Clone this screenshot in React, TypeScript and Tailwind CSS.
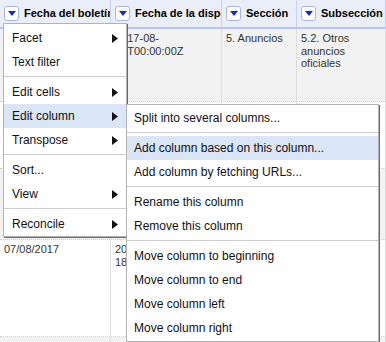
import React from 'react';

const font = { fontFamily: '"Liberation Sans", Arial, sans-serif' };

interface Row {
  cells: React.ReactNode[];
  height: string;
  shaded: boolean;
}

const rows: Row[] = [
  {
    height: 'h-[73px]',
    shaded: true,
    cells: ['07/08/2017', <>2017-08-<br />07T00:00:00Z</>, '5. Anuncios', <>5.2. Otros<br />anuncios<br />oficiales</>],
  },
  { height: 'h-[67px]', shaded: false, cells: ['07/08/2017', <>2017-08-<br />07T00:00:00Z</>, '', ''] },
  { height: 'h-[71px]', shaded: true, cells: ['07/08/2017', <>2017-08-<br />07T00:00:00Z</>, '', ''] },
  { height: 'h-[97px]', shaded: false, cells: ['07/08/2017', <>2017-08-<br />18T00:00:00Z</>, '', ''] },
  { height: 'h-[40px]', shaded: true, cells: ['07/08/2017', <>2017-08-<br />18T00:00:00Z</>, '', ''] },
];

const widths = ['w-[111px]', 'w-[111px]', 'w-[75px]', 'flex-1'];

function DropButton() {
  return (
    <span className="flex h-[15px] w-[15px] shrink-0 items-center justify-center rounded-[3px] border border-[#a9b6e4] bg-white">
      <svg width="8" height="5" viewBox="0 0 8 5">
        <path d="M0 0h8L4 5z" fill="#1a2bc4" />
      </svg>
    </span>
  );
}

function Arrow() {
  return (
    <svg width="6" height="9" viewBox="0 0 6 9" className="mr-[8px]">
      <path d="M0 0l6 4.5L0 9z" fill="#111" />
    </svg>
  );
}

type Item = { label: string; sub?: boolean; active?: boolean } | 'sep';

const mainItems: Item[] = [
  { label: 'Facet', sub: true },
  { label: 'Text filter' },
  'sep',
  { label: 'Edit cells', sub: true },
  { label: 'Edit column', sub: true, active: true },
  { label: 'Transpose', sub: true },
  'sep',
  { label: 'Sort...' },
  { label: 'View', sub: true },
  'sep',
  { label: 'Reconcile', sub: true },
];

const subItems: Item[] = [
  { label: 'Split into several columns...' },
  'sep',
  { label: 'Add column based on this column...', active: true },
  { label: 'Add column by fetching URLs...' },
  'sep',
  { label: 'Rename this column' },
  { label: 'Remove this column' },
  'sep',
  { label: 'Move column to beginning' },
  { label: 'Move column to end' },
  { label: 'Move column left' },
  { label: 'Move column right' },
];

function MenuList({ items, indent }: { items: Item[]; indent: string }) {
  return (
    <>
      {items.map((it, i) =>
        it === 'sep' ? (
          <div key={i} className="mb-[3px] mt-[2px] h-px bg-[#cccccc]" />
        ) : (
          <div
            key={i}
            className={`flex h-6 items-center justify-between ${indent} ${it.active ? 'bg-[#dae5f6]' : ''}`}
          >
            <span>{it.label}</span>
            {it.sub && <Arrow />}
          </div>
        )
      )}
    </>
  );
}

export default function App() {
  const headers = ['Fecha del boletín', 'Fecha de la disposición', 'Sección', 'Subsección'];

  return (
    <div className="relative h-[342px] w-[386px] overflow-hidden bg-white text-[12px] text-[#222]" style={font}>
      {/* Header */}
      <div className="flex h-[29px] border-b-2 border-[#b7c4ee] bg-[#eaeef8]">
        {headers.map((h, i) => (
          <div
            key={h}
            className={`${widths[i]} flex items-center gap-[5px] overflow-hidden whitespace-nowrap border-r border-[#c8d2f2] pl-[4px] text-[11px] font-bold text-black`}
          >
            <DropButton />
            <span>{h}</span>
          </div>
        ))}
      </div>

      {/* Rows */}
      {rows.map((r, ri) => (
        <div
          key={ri}
          className={`flex ${r.height} border-b border-dotted border-[#cfcfcf] ${r.shaded ? 'bg-[#f2f2f2]' : 'bg-white'}`}
        >
          {r.cells.map((c, ci) => (
            <div
              key={ci}
              className={`${widths[ci]} overflow-hidden border-r border-[#dddddd] px-[4px] pt-[3px] text-[11px] leading-[12.5px] text-[#333]`}
            >
              {c}
            </div>
          ))}
        </div>
      ))}

      {/* Column menu */}
      <div className="absolute left-[3px] top-[23px] w-[124px] border border-[#b3b3b3] bg-white pt-[2px] text-[#111] shadow-[1px_1px_0_#6a6a6a]">
        <MenuList items={mainItems} indent="pl-[8px]" />
      </div>

      {/* Edit column submenu */}
      <div className="absolute left-[126px] top-[104px] w-[253px] border border-[#b3b3b3] bg-white pb-[1px] pt-[1px] text-[#111] shadow-[1px_1px_0_#6a6a6a]">
        <MenuList items={subItems} indent="pl-[7px]" />
      </div>
    </div>
  );
}
